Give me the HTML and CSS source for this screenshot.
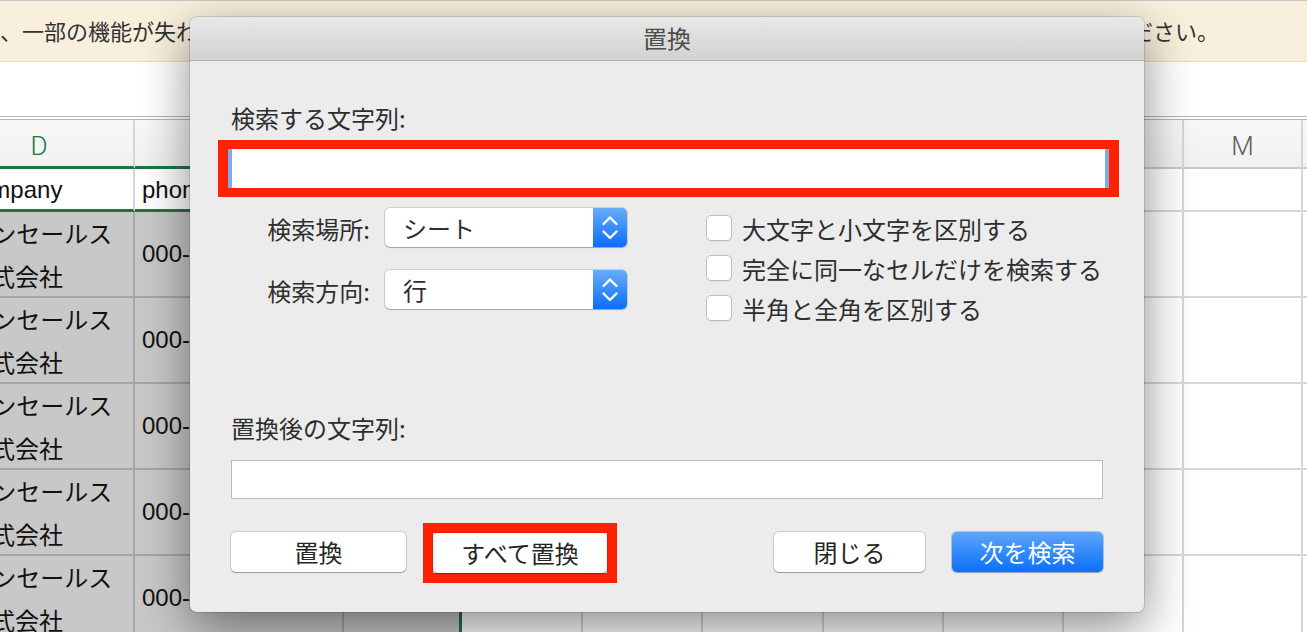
FILE: index.html
```html
<!DOCTYPE html>
<html lang="ja">
<head>
<meta charset="utf-8">
<title>置換</title>
<link rel="stylesheet" href="styles.css">
</head>
<body>
<div class="msgbar">
  <span class="msg-left">、一部の機能が失われる可能性があります。</span>
  <span class="msg-right">ブックを保存してください。</span>
</div>
<div class="formula"></div>
<div class="sheet">
  <div class="c h sel-h">D</div><div class="c h sel-h">E</div><div class="c h sel-h">F</div><div class="c h">G</div><div class="c h">H</div><div class="c h">I</div><div class="c h">J</div><div class="c h">K</div><div class="c h">L</div><div class="c h">M</div><div class="c h">N</div>

  <div class="c r2 cd"><span class="company">company</span></div><div class="c r2 ce">phone</div><div class="c r2 cf">email</div><div class="c"></div><div class="c"></div><div class="c"></div><div class="c"></div><div class="c"></div><div class="c"></div><div class="c"></div><div class="c"></div>

  <div class="c s cd"><span class="two"><span class="l1">パンセールス</span><span class="l2">株式会社</span></span></div><div class="c s ce">000-0000-0000</div><div class="c s cf"></div><div class="c"></div><div class="c"></div><div class="c"></div><div class="c"></div><div class="c"></div><div class="c"></div><div class="c"></div><div class="c"></div>

  <div class="c s cd"><span class="two"><span class="l1">パンセールス</span><span class="l2">株式会社</span></span></div><div class="c s ce">000-0000-0000</div><div class="c s cf"></div><div class="c"></div><div class="c"></div><div class="c"></div><div class="c"></div><div class="c"></div><div class="c"></div><div class="c"></div><div class="c"></div>

  <div class="c s cd"><span class="two"><span class="l1">パンセールス</span><span class="l2">株式会社</span></span></div><div class="c s ce">000-0000-0000</div><div class="c s cf"></div><div class="c"></div><div class="c"></div><div class="c"></div><div class="c"></div><div class="c"></div><div class="c"></div><div class="c"></div><div class="c"></div>

  <div class="c s cd"><span class="two"><span class="l1">パンセールス</span><span class="l2">株式会社</span></span></div><div class="c s ce">000-0000-0000</div><div class="c s cf"></div><div class="c"></div><div class="c"></div><div class="c"></div><div class="c"></div><div class="c"></div><div class="c"></div><div class="c"></div><div class="c"></div>

  <div class="c s cd"><span class="two"><span class="l1">パンセールス</span><span class="l2">株式会社</span></span></div><div class="c s ce">000-0000-0000</div><div class="c s cf"></div><div class="c"></div><div class="c"></div><div class="c"></div><div class="c"></div><div class="c"></div><div class="c"></div><div class="c"></div><div class="c"></div>
</div>

<div class="dialog">
  <div class="titlebar">置換</div>
  <div class="dlg-body">
    <div class="field-label">検索する文字列:</div>
    <div class="hl find-hl"><div class="textfield focused"></div></div>

    <div class="options">
      <div class="opt-left">
        <div class="opt-label">検索場所:</div>
        <div class="popup"><span class="popup-text">シート</span><span class="stepper"><svg width="34" height="39" viewBox="0 0 34 39"><path d="M10.5 16 L17 9.5 L23.5 16 M10.5 23.5 L17 30 L23.5 23.5" fill="none" stroke="#fff" stroke-width="2.4" stroke-linecap="round" stroke-linejoin="round"/></svg></span></div>
        <div class="opt-label">検索方向:</div>
        <div class="popup"><span class="popup-text">行</span><span class="stepper"><svg width="34" height="39" viewBox="0 0 34 39"><path d="M10.5 16 L17 9.5 L23.5 16 M10.5 23.5 L17 30 L23.5 23.5" fill="none" stroke="#fff" stroke-width="2.4" stroke-linecap="round" stroke-linejoin="round"/></svg></span></div>
      </div>
      <div class="opt-right">
        <div class="check"><span class="box"></span>大文字と小文字を区別する</div>
        <div class="check"><span class="box"></span>完全に同一なセルだけを検索する</div>
        <div class="check"><span class="box"></span>半角と全角を区別する</div>
      </div>
    </div>

    <div class="field-label repl-label">置換後の文字列:</div>
    <div class="textfield plain"></div>

    <div class="buttons">
      <button class="btn w175">置換</button>
      <div class="hl btn-hl"><button class="btn w174">すべて置換</button></div>
      <span class="spacer"></span>
      <button class="btn w151">閉じる</button>
      <button class="btn w151 primary">次を検索</button>
    </div>
  </div>
</div>
</body>
</html>
```
FILE: styles.css
```css
* { box-sizing: border-box; }

body {
  margin: 0;
  width: 1307px;
  height: 632px;
  overflow: hidden;
  position: relative;
  background: #fff;
  font-family: "Noto Sans CJK JP", sans-serif;
  color: #222;
}

/* ---------- background: message bar ---------- */
.msgbar {
  height: 62px;
  border-top: 1px solid #c8c8c8;
  border-bottom: 1px solid #e4dbc4;
  background: #f8f0dc;
  display: flex;
  align-items: center;
  justify-content: space-between;
  padding-right: 88px;
  padding-bottom: 3px;
  font-size: 22px;
  color: #333;
  white-space: nowrap;
  overflow: hidden;
}

.formula {
  height: 58px;
  background: #fff;
  border-bottom: 4px double #b5b5b5;
}

/* ---------- background: sheet grid ---------- */
.sheet {
  margin-left: -55px;
  display: grid;
  grid-template-columns: 190px 209px 118px 121px 120px 121px 120px 120px 120px 119px 120px;
  grid-template-rows: 49px 43px 86px 86px 86px 86px 86px;
  font-family: "Liberation Sans", "Noto Sans CJK JP", sans-serif;
  font-size: 24px;
  color: #111;
}

.c {
  border-right: 2px solid #d6d6d6;
  border-bottom: 2px solid #d6d6d6;
  background: #fff;
  overflow: hidden;
  white-space: nowrap;
  display: flex;
  align-items: center;
}

.h {
  justify-content: center;
  padding-top: 5px;
  background: linear-gradient(#f8f8f8, #f1f1f1);
  color: #5a5a5a;
  font-family: Roboto, "Liberation Sans", sans-serif;
  font-weight: 300;
  font-size: 26px;
  border-bottom-color: #c9c9c9;
}

.sel-h {
  color: #217346;
  border-bottom: 3px solid #217346;
}

.r2 { padding-top: 2px; }

.r2.cd, .r2.ce, .r2.cf {
  border-bottom: 3px solid #217346;
}

.s {
  background: #c8c8c8;
  border-right-color: #a6a6a6;
  border-bottom-color: #a6a6a6;
}

.cf { border-right: 3px solid #217346; }

.cd { padding-left: 25px; }
.cd .company { margin-left: -5px; }
.ce { padding-left: 7px; }

.two {
  font-family: "Noto Sans CJK JP", sans-serif;
  line-height: 43px;
  display: flex;
  flex-direction: column;
}

.l1 { margin-left: -3px; }
.l2 { margin-left: -3px; }

/* ---------- dialog ---------- */
.dialog {
  position: absolute;
  left: 190px;
  top: 17px;
  width: 954px;
  height: 595px;
  border-radius: 7px;
  background: #ececec;
  box-shadow: 0 16px 50px rgba(0, 0, 0, 0.46), 0 0 0 1px rgba(0, 0, 0, 0.12);
  overflow: hidden;
  font-size: 24px;
  color: #2e2e2e;
}

.titlebar {
  height: 44px;
  background: linear-gradient(#e8e8e8, #d2d2d2);
  border-bottom: 1px solid #b3b3b3;
  display: flex;
  align-items: center;
  justify-content: center;
  color: #4b4b4b;
  padding-bottom: 2px;
}

.dlg-body {
  padding: 42px 41px 0 41px;
}

.field-label {
  line-height: 30px;
  height: 30px;
}

.hl {
  border: 10px solid #ff2200;
  border-top-width: 9px;
  border-bottom-width: 9px;
}

.find-hl {
  margin: 7px -16px 0 -13px;
}

.textfield {
  height: 39px;
  background: #fff;
}

.textfield.focused {
  box-shadow: inset 4px 0 0 #7daaea, inset -4px 0 0 #7daaea;
}

.textfield.plain {
  margin-top: 17px;
  border: 1px solid #bababa;
}

/* options */
.options {
  margin-top: 11px;
  display: flex;
  height: 120px;
}

.opt-left {
  display: grid;
  grid-template-columns: 139px 242px;
  grid-template-rows: 39px 39px;
  column-gap: 15px;
  row-gap: 23px;
  align-content: start;
}

.opt-label {
  text-align: right;
  line-height: 39px;
  padding-top: 1px;
}

.popup {
  position: relative;
  display: flex;
  align-items: center;
  justify-content: space-between;
  background: #fff;
  border-radius: 5px;
  box-shadow: 0 0 0 1px rgba(0, 0, 0, 0.12), 0 1px 1px rgba(0, 0, 0, 0.22);
  overflow: hidden;
}

.popup-text {
  padding-left: 18px;
  line-height: 39px;
}

.stepper {
  width: 34px;
  height: 39px;
  background: linear-gradient(#69acfb, #0a6ef7);
  display: flex;
}

.opt-right {
  margin-left: 79px;
  display: flex;
  flex-direction: column;
}

.check {
  height: 40px;
  display: flex;
  align-items: center;
  white-space: nowrap;
}

.box {
  width: 26px;
  height: 26px;
  margin-right: 10px;
  background: #fff;
  border: 1px solid #bdbdbd;
  border-radius: 5px;
  box-shadow: 0 1px 0 rgba(0, 0, 0, 0.05);
}

.repl-label {
  margin-top: 85px;
}

/* buttons */
.buttons {
  margin-top: 24px;
  display: flex;
  align-items: flex-start;
}

.btn {
  height: 40px;
  margin-top: 9px;
  font-family: "Noto Sans CJK JP", sans-serif;
  font-size: 24px;
  color: #252525;
  background: #fff;
  border: none;
  border-radius: 5px;
  box-shadow: 0 0 0 1px rgba(0, 0, 0, 0.13), 0 1px 1px rgba(0, 0, 0, 0.25);
  padding: 0;
  line-height: 40px;
}

.btn-hl {
  margin-left: 17px;
  border-width: 10px;
}

.btn-hl .btn {
  margin-top: 0;
  display: block;
}

.w175 { width: 175px; }
.w174 { width: 174px; }
.w151 { width: 151px; }

.spacer { flex: 1; }

.primary {
  margin-left: 27px;
  color: #fff;
  background: linear-gradient(#5ea5fc, #0b6ff8);
  box-shadow: 0 0 0 1px rgba(0, 80, 200, 0.25), 0 1px 1px rgba(0, 0, 0, 0.2);
}
```
